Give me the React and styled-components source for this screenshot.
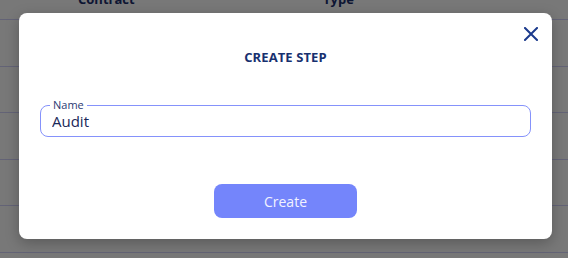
import React, { useState } from 'react';
import styled, { createGlobalStyle } from 'styled-components';

const GlobalStyle = createGlobalStyle`
  html, body {
    margin: 0;
    padding: 0;
    background: #ffffff;
    font-family: "Open Sans", "Noto Sans", sans-serif;
    overflow: hidden;
  }
`;

const Page = styled.div`
  width: 568px;
  height: 258px;
  position: relative;
  overflow: hidden;
  background: #ffffff;
`;

const Table = styled.div`
  margin-top: -22px;
  display: flex;
  flex-direction: column;
`;

const HeaderRow = styled.div`
  display: grid;
  grid-template-columns: 78px 245px 1fr;
  height: 41px;
  align-items: center;
  border-bottom: 1px solid #d3d3fa;
  font-size: 13px;
  font-weight: 700;
  color: #1d2f6e;
`;

const Row = styled.div`
  height: 45.6px;
  border-bottom: 1px solid #d3d3fa;
`;

const Backdrop = styled.div`
  position: absolute;
  inset: 0;
  background: rgba(0, 0, 0, 0.53);
`;

const Modal = styled.div`
  position: absolute;
  top: 13px;
  left: 19px;
  width: 533px;
  height: 226px;
  box-sizing: border-box;
  background: #ffffff;
  border-radius: 8px;
  box-shadow: 0 4px 14px rgba(0, 0, 0, 0.25);
  padding: 35px 21px 0;
  display: flex;
  flex-direction: column;
  align-items: center;
`;

const CloseButton = styled.button`
  position: absolute;
  top: 12px;
  right: 12px;
  width: 18px;
  height: 18px;
  padding: 0;
  border: none;
  background: none;
  cursor: pointer;
  display: flex;
  align-items: center;
  justify-content: center;
`;

const Title = styled.h2`
  margin: 0;
  font-size: 13px;
  line-height: 18px;
  font-weight: 700;
  color: #17306f;
  letter-spacing: 0.1px;
`;

const Field = styled.div`
  position: relative;
  align-self: stretch;
  margin-top: 39px;
  height: 32px;
  box-sizing: border-box;
  border: 1px solid #8592fb;
  border-radius: 8px;
`;

const Label = styled.label`
  position: absolute;
  top: -8px;
  left: 9px;
  padding: 0 3px;
  background: #ffffff;
  font-size: 11px;
  line-height: 14px;
  color: #2b3a72;
`;

const Input = styled.input`
  width: 100%;
  height: 100%;
  box-sizing: border-box;
  border: none;
  outline: none;
  background: transparent;
  padding: 0 11px;
  font-family: inherit;
  font-size: 15px;
  color: #1a2858;
`;

const SubmitButton = styled.button`
  margin-top: 47px;
  width: 143px;
  height: 34px;
  border: none;
  border-radius: 8px;
  background: #7485fb;
  color: #f2f3ff;
  font-family: inherit;
  font-size: 14px;
  cursor: pointer;
`;

const App = () => {
  const [name, setName] = useState('Audit');

  return (
    <Page>
      <GlobalStyle />
      <Table>
        <HeaderRow>
          <span />
          <span>Contract</span>
          <span>Type</span>
        </HeaderRow>
        {[0, 1, 2, 3, 4].map(i => <Row key={i} />)}
      </Table>
      <Backdrop />
      <Modal>
        <CloseButton aria-label="close">
          <svg width="14" height="14" viewBox="0 0 14 14">
            <path d="M1 1 L13 13 M13 1 L1 13" stroke="#1b3a8c" strokeWidth="2" strokeLinecap="square" fill="none" />
          </svg>
        </CloseButton>
        <Title>CREATE STEP</Title>
        <Field>
          <Label>Name</Label>
          <Input value={name} onChange={e => setName(e.target.value)} />
        </Field>
        <SubmitButton>Create</SubmitButton>
      </Modal>
    </Page>
  );
};

export default App;
